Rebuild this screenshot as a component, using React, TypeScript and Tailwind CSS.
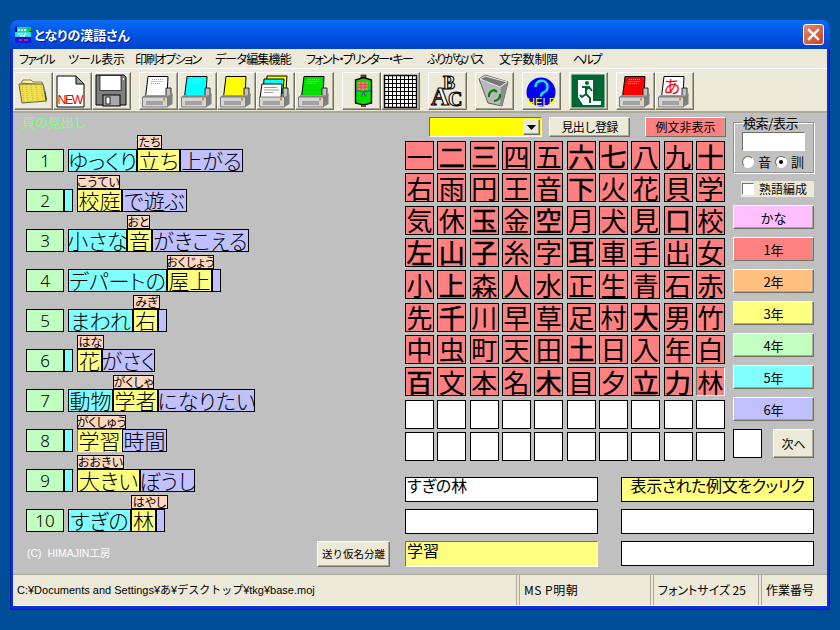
import React from 'react';

const raised = 'border border-t-white border-l-white border-r-[#716f64] border-b-[#716f64] shadow-[inset_-1px_-1px_0_#aca899]';
const sunken = 'border border-t-[#716f64] border-l-[#716f64] border-r-white border-b-white';
const jp = { fontFeatureSettings: '"palt"' };

const CYAN = 'bg-[#80ffff]';
const YELLOW = 'bg-[#ffff80]';
const PURPLE = 'bg-[#c0c0ff]';

type Row = {
  cyan: [string, number];
  kanji: [string, number];
  rest: [string, number];
  ruby: [string, number];
};

const rows: Row[] = [
  { cyan: ['ゆっくり', 69], kanji: ['立ち', 43], rest: ['上がる', 63], ruby: ['たち', 25] },
  { cyan: ['', 9], kanji: ['校庭', 45], rest: ['で遊ぶ', 65], ruby: ['こうてい', 43] },
  { cyan: ['小さな', 59], kanji: ['音', 25], rest: ['がきこえる', 97], ruby: ['おと', 23] },
  { cyan: ['デパートの', 99], kanji: ['屋上', 45], rest: ['', 9], ruby: ['おくじょう', 47] },
  { cyan: ['まわれ', 65], kanji: ['右', 25], rest: ['', 9], ruby: ['みぎ', 27] },
  { cyan: ['', 9], kanji: ['花', 25], rest: ['がさく', 53], ruby: ['はな', 27] },
  { cyan: ['動物', 45], kanji: ['学者', 45], rest: ['になりたい', 97], ruby: ['がくしゃ', 41] },
  { cyan: ['', 9], kanji: ['学習', 45], rest: ['時間', 45], ruby: ['がくしゅう', 49] },
  { cyan: ['', 9], kanji: ['大きい', 63], rest: ['ぼうし', 55], ruby: ['おおきい', 47] },
  { cyan: ['すぎの', 63], kanji: ['林', 25], rest: ['', 9], ruby: ['はやし', 37] },
];

const kanjiRows = [
  '一二三四五六七八九十',
  '右雨円王音下火花貝学',
  '気休玉金空月犬見口校',
  '左山子糸字耳車手出女',
  '小上森人水正生青石赤',
  '先千川早草足村大男竹',
  '中虫町天田土日入年白',
  '百文本名木目夕立力林',
];
const heavy = '二三六七十下玉空口左山子耳上千大土立力木百';

const menus = [
  ['ファイル', 'w-[49px] tracking-[-1.7px]'],
  ['ツール表示', 'w-[67px] tracking-[-0.3px]'],
  ['印刷オプション', 'w-[80px] tracking-[-1.6px]'],
  ['データ編集機能', 'w-[91px] tracking-[-0.8px]'],
  ['フォント・プリンター・キー', 'w-[121px] tracking-[-1.7px]'],
  ['ふりがなパス', 'w-[72px] tracking-[-1.9px]'],
  ['文字数制限', 'w-[74px] tracking-[-0.2px]'],
  ['ヘルプ', 'w-[30px] tracking-[-2.5px]'],
];

const grades = [
  ['かな', 'bg-[#ffc0ff]'],
  ['1年', 'bg-[#ff8080]'],
  ['2年', 'bg-[#ffc080]'],
  ['3年', 'bg-[#ffff80]'],
  ['4年', 'bg-[#c0ffc0]'],
  ['5年', 'bg-[#80ffff]'],
  ['6年', 'bg-[#c0c0ff]'],
];

const Tool = ({ children }: { children: React.ReactNode }) => (
  <div className={`w-[39px] h-[38px] bg-[#ece9d8] overflow-hidden ${raised}`}>
    <svg width="37" height="36" viewBox="1 1 37 36">{children}</svg>
  </div>
);

const PrinterBody = () => (
  <>
    <path d="M27 16h5v10h-5z" fill="#c0c0c0" stroke="#000" strokeWidth="0.8" />
    <path d="M3.5 25l2-2h25l3-1.500v3l-5 0.500z" fill="#9a9a9a" />
    <path d="M3.5 25h25v10h-25z" fill="#d4d4d4" stroke="#555" strokeWidth="0.7" />
    <path d="M28.500 25l5-3.500v10.500l-5 3z" fill="#808080" />
    <path d="M7 30h17M7 32h17" stroke="#707070" strokeWidth="1" />
    <rect x="24" y="26.500" width="2" height="1" fill="#e02020" />
    <rect x="24" y="28" width="2" height="1" fill="#e0c020" />
  </>
);

const Printer = ({ paper, dots = true, children }: { paper: string; dots?: boolean; children?: React.ReactNode }) => (
  <Tool>
    <path d="M9 4.500h20l-1 20.500H6.500z" fill={paper} stroke="#000" strokeWidth="1" />
    {dots && <path d="M13 7.500h12M12.500 9.500h12M12 11.500h9" stroke="#fff" strokeWidth="1" strokeDasharray="1 1" opacity="0.75" />}
    {children}
    <PrinterBody />
  </Tool>
);

const Num = ({ n }: { n: number }) => (
  <div className="w-[38px] h-[23px] shrink-0 border border-black bg-[#c0ffc0] flex items-center justify-center text-[17px] leading-none font-light text-black" style={{ fontFamily: '"Noto Sans", sans-serif' }}>
    {n}
  </div>
);

const segBase = 'h-[23px] shrink-0 flex items-center justify-center whitespace-nowrap text-[21px] leading-none font-light';

const Seg = ({ text, width, color, extra = '' }: { text: string; width: number; color: string; extra?: string }) => (
  <div className={`${segBase} border border-black ${color} ${extra}`} style={{ width, ...jp }}>
    {text}
  </div>
);

export default function App() {
  return (
    <div className="w-[840px] h-[630px] bg-[#004e98] pt-5 pl-2.5 overflow-hidden text-black" style={{ fontFamily: '"Noto Sans CJK JP", sans-serif' }}>
      <div className="w-[820px] h-[590px] rounded-t-lg bg-[#0831d9] flex flex-col shadow-[inset_-1px_-1px_0_#001ea0,inset_1px_0_0_#001ea0] overflow-hidden">
        {/* Title bar */}
        <div className="h-[29px] shrink-0 flex items-center pl-[5px] pr-[6px] bg-linear-to-b from-[#0a6cf5] via-[#0054e3] to-[#0042cc]">
          <svg width="16" height="16" viewBox="0 0 16 16" className="shrink-0">
            <rect width="16" height="16" fill="#0000c0" />
            <rect x="2" width="12" height="5" fill="#20d0a0" />
            <rect y="5" width="16" height="5" fill="#30e0e0" />
            <rect y="11" width="16" height="5" fill="#1818e0" />
            <path d="M3 3h10M3 7h10M5 9h6" stroke="#fff" strokeWidth="1.300" strokeDasharray="2 1" />
            <path d="M4 13h3M9 13h4" stroke="#ff3030" strokeWidth="1.500" />
            <rect x="12" width="4" height="4" fill="#30c030" />
          </svg>
          <span className="ml-[3px] text-[13px] font-bold text-white [text-shadow:1px_1px_0_#00209a]" style={jp}>となりの漢語さん</span>
          <div className="ml-auto w-[21px] h-[21px] rounded-[3px] border border-white bg-linear-to-br from-[#e8856a] to-[#c8401c] flex items-center justify-center">
            <svg width="13" height="13" viewBox="0 0 13 13">
              <path d="M2 2l9 9M11 2l-9 9" stroke="#fff" strokeWidth="2.400" strokeLinecap="square" />
            </svg>
          </div>
        </div>

        {/* Menu */}
        <div className="mx-[3px] h-[20px] shrink-0 bg-[#ece9d8] border-b border-white flex items-center text-[12px] leading-none pl-[6px]">
          {menus.map(([m, cls]) => (
            <span key={m} className={`shrink-0 whitespace-nowrap ${cls}`} style={jp}>{m}</span>
          ))}
        </div>

        {/* Toolbar */}
        <div className="mx-[3px] h-[44px] shrink-0 bg-[#ece9d8] border-b-2 border-[#aca899] flex items-center pl-px gap-2 pt-px">
          <div className="flex">
            <Tool>
              <path d="M7 11l2-3h8l2 2h9l1 3z" fill="#f8f0a0" stroke="#808060" />
              <path d="M5 12h24l3 17-24 2z" fill="#f0e050" stroke="#606040" />
              <path d="M8 13l2 17M12 13l2 17M17 13l2 17M22 13l2 16M27 13l2 16" stroke="#c8b830" strokeWidth="1.200" strokeDasharray="1 1" />
              <path d="M30 13l3 14-1 3-2-17z" fill="#404040" />
            </Tool>
            <Tool>
              <path d="M4 4h19l8 8v23H4z" fill="#fff" stroke="#000" />
              <path d="M23 4l8 8h-8z" fill="#a0a0a0" stroke="#000" />
              <text x="4.500" y="32" fontSize="12.500" fill="#f00000" fontFamily="Liberation Sans, sans-serif" textLength="26">NEW</text>
            </Tool>
            <Tool>
              <path d="M4 3h28l2 2v28H4z" fill="#808080" stroke="#000" />
              <rect x="8" y="3.500" width="21" height="15" fill="#fff" stroke="#000" strokeWidth="0.700" />
              <rect x="11" y="23" width="17" height="11" fill="#a8a8a8" stroke="#000" />
              <rect x="14" y="25" width="4" height="7" fill="#fff" stroke="#000" strokeWidth="0.800" />
              <rect x="31" y="6" width="1" height="2" fill="#fff" />
            </Tool>
          </div>
          <div className="flex">
            <Printer paper="#ffffff">
              <path d="M13 7.500h12M12.500 9.500h12M12 11.500h9" stroke="#999" strokeWidth="1" strokeDasharray="1 1" />
            </Printer>
            <Printer paper="#00ffff" />
            <Printer paper="#ffff00" />
            <Tool>
              <path d="M11 4h20l-1 14H10z" fill="#ffff00" stroke="#000" />
              <path d="M8 7h20l-1 14H7z" fill="#00ffff" stroke="#000" />
              <path d="M6 12h20l-1 14H4z" fill="#fff" stroke="#000" />
              <path d="M8 15.500h13M8 18h15M8 20.500h9" stroke="#999" strokeWidth="1" />
              <path d="M27 16h5v10h-5z" fill="#c0c0c0" stroke="#000" strokeWidth="0.800" />
              <path d="M3.500 25h25v10h-25z" fill="#d4d4d4" stroke="#555" strokeWidth="0.700" />
              <path d="M28.500 25l5-3.500v10.500l-5 3z" fill="#808080" />
              <path d="M7 30h17M7 32h17" stroke="#707070" strokeWidth="1" />
              <rect x="24" y="26.500" width="2" height="1" fill="#e02020" />
              <rect x="24" y="28" width="2" height="1" fill="#e0c020" />
            </Tool>
            <Printer paper="#00e000" />
          </div>
          <div className="flex">
            <Tool>
              <rect x="19" y="3" width="5" height="4" fill="#904020" stroke="#000" strokeWidth="0.600" />
              <path d="M13.500 8l8-2.500 8 2.500v23l-8 2-8-2z" fill="#00e000" stroke="#000" strokeWidth="1.400" />
              <rect x="16" y="10" width="10" height="8" fill="#f08080" />
              <path d="M16 12.500h10M16 15h10M19 10v8M23 10v8" stroke="#c03030" strokeWidth="0.600" />
              <path d="M13.500 18c5 2 11 2 16 0M21.500 19.500l-2 5M21.500 19.500l2 5" fill="none" stroke="#8020c0" strokeWidth="1" />
              <rect x="19" y="33" width="5" height="2" fill="#904020" />
            </Tool>
            <Tool>
              <rect x="3.500" y="3.500" width="32" height="32" fill="#fff" stroke="#000" strokeWidth="1.500" />
              <path d="M7.500 4v31M11.500 4v31M15.500 4v31M19.500 4v31M23.500 4v31M27.500 4v31M31.500 4v31M4 7.500h31M4 11.500h31M4 15.500h31M4 19.500h31M4 23.500h31M4 27.500h31M4 31.500h31" stroke="#000" strokeWidth="1" />
            </Tool>
          </div>
          <Tool>
            <g fontFamily="Liberation Serif, serif" fontWeight="700" fill="#fff" stroke="#000" strokeWidth="1.100">
              <text x="15" y="17" fontSize="18">B</text>
              <text x="3" y="33" fontSize="25">A</text>
              <text x="20" y="34" fontSize="20">C</text>
            </g>
          </Tool>
          <Tool>
            <path d="M4 7l6-4 23 7-6 24-14-3z" fill="#b8b8b8" stroke="#606060" />
            <path d="M27 34l6-24-7 5-1 19z" fill="#8c8c8c" />
            <path d="M5 7l5-3 22 6-7 5z" fill="#787878" stroke="#e8e8e8" />
            <path d="M14 25a6 6 0 0 1 5-7l3 2M25 22a6 6 0 0 1-6 7" fill="none" stroke="#008000" strokeWidth="2.200" />
          </Tool>
          <Tool>
            <circle cx="19" cy="20" r="14.500" fill="#0000f0" />
            <path d="M13.500 15a6 6 0 1 1 8 5.500c-2 .8-2.500 1.500-2.500 4" fill="none" stroke="#20e0f0" strokeWidth="2.600" />
            <text x="5" y="34" fontSize="11" fill="#ffff00" fontFamily="Liberation Sans, sans-serif" textLength="29">HELP</text>
          </Tool>
          <Tool>
            <rect x="2.500" y="2.500" width="33" height="33" fill="#006633" />
            <path d="M9 8h15v21h8v4H14l-5-8z" fill="#fff" />
            <circle cx="18" cy="11" r="2" fill="#006633" />
            <path d="M13 15h7l3 4M17 15v7l4 4v5M17 22l-4 3-2-2M20 15l-3 3" fill="none" stroke="#006633" strokeWidth="2" />
          </Tool>
          <div className="flex">
            <Printer paper="#ff0000" />
            <Printer paper="#ffffff" dots={false}>
              <text x="8.500" y="21" fontSize="17" fill="#ff0000" style={{ fontFamily: '"Noto Sans CJK JP", sans-serif' }}>あ</text>
            </Printer>
          </div>
        </div>

        {/* Body */}
        <div className="mx-[3px] h-[461px] shrink-0 bg-[#c0c0c0] flex">
          {/* Sentences */}
          <div className="w-[392px] shrink-0 flex flex-col">
            <div className="h-[19px] pl-[9px] pt-[1px] text-[13px] leading-4 text-[#80ff80]">頁の見出し</div>
            <div className="flex flex-col pl-[13px]">
              {rows.map((r, i) => (
                <div key={i} className="h-10 flex items-end">
                  <Num n={i + 1} />
                  <Seg text={r.cyan[0]} width={r.cyan[1]} color={CYAN} extra={r.cyan[0] ? 'ml-1' : ''} />
                  <div className={`relative shrink-0 ${r.cyan[0] ? '' : 'ml-1'}`}>
                    <div className="absolute left-0 bottom-[23px] h-[14px] border border-black bg-[#ffd8c0] text-[12px] leading-none flex items-center justify-center whitespace-nowrap" style={{ width: r.ruby[1], ...jp }}>
                      {r.ruby[0]}
                    </div>
                    {i === 7 ? (
                      <div className={`${segBase} ${YELLOW} ${sunken}`} style={{ width: r.kanji[1], ...jp }}>{r.kanji[0]}</div>
                    ) : (
                      <Seg text={r.kanji[0]} width={r.kanji[1]} color={YELLOW} />
                    )}
                  </div>
                  <Seg text={r.rest[0]} width={r.rest[1]} color={PURPLE} />
                </div>
              ))}
            </div>
            <div className="mt-[9px] pl-[14px] pr-[15px] h-[26px] flex items-center justify-between">
              <span className="text-[10.5px] text-white whitespace-nowrap" style={{ fontFamily: '"Liberation Sans", "Noto Sans CJK JP", sans-serif' }}>(C)&nbsp; HIMAJIN工房</span>
              <button className={`w-[73px] h-[26px] bg-[#ece9d8] text-[10.5px] leading-none whitespace-nowrap ${raised}`}>送り仮名分離</button>
            </div>
          </div>

          {/* Kanji panel and example fields */}
          <div className="flex-1 flex flex-col">
            <div className="flex">
              <div className="w-[321px] shrink-0 pt-1">
                <div className="flex items-stretch h-5">
                  <div className={`ml-6 w-[113px] flex bg-[#ffff00] p-px ${sunken}`}>
                    <div className="flex-1" />
                    <div className={`w-[17px] bg-[#ece9d8] flex items-center justify-center ${raised}`}>
                      <svg width="9" height="5" viewBox="0 0 18 10"><path d="M0 0h18L9 10z" fill="#000" /></svg>
                    </div>
                  </div>
                  <button className={`ml-[7px] w-[81px] bg-[#ece9d8] text-[12px] leading-none tracking-[-0.8px] ${raised}`}>見出し登録</button>
                  <button className={`ml-[15px] w-[81px] bg-[#ff8080] text-[12px] leading-none ${raised}`}>例文非表示</button>
                </div>
                <div className="mt-1 grid grid-cols-[repeat(10,29px)] auto-rows-[29px] gap-[3.33px]">
                  {kanjiRows.join('').split('').map((k, i) => (
                    <div key={i} className={`bg-[#ff8080] flex items-center justify-center text-[26px] leading-none ${i === 79 ? sunken : 'border border-black'} ${heavy.includes(k) ? '[-webkit-text-stroke:0.5px_black]' : ''}`}>
                      {k}
                    </div>
                  ))}
                  {Array.from({ length: 20 }).map((_, i) => (
                    <div key={i} className="bg-white border border-black" />
                  ))}
                </div>
              </div>

              {/* Right controls */}
              <div className="w-[81px] ml-[7px] shrink-0 flex flex-col">
                <fieldset className="mt-[3px] h-[57px] border border-[#909090] shadow-[1px_1px_0_#fff,inset_1px_1px_0_#fff] px-2">
                  <legend className="px-px text-[13px] leading-[13px] whitespace-nowrap tracking-[-0.4px]" style={jp}>検索/表示</legend>
                  <div className={`mt-[3px] h-[19px] bg-white ${sunken}`} />
                  <div className="mt-[4px] flex items-center text-[13px] leading-none">
                    <span className={`w-3 h-3 rounded-full bg-white ${sunken}`} />
                    <span className="ml-[4px]">音</span>
                    <span className={`ml-[4px] w-3 h-3 rounded-full bg-white flex items-center justify-center ${sunken}`}>
                      <span className="w-1 h-1 rounded-full bg-black" />
                    </span>
                    <span className="ml-[4px]">訓</span>
                  </div>
                </fieldset>
                <div className="mt-2 ml-2 h-4 flex items-center bg-[#ece9d8] text-[12px] leading-none">
                  <span className={`ml-px w-3 h-3 bg-white ${sunken}`} />
                  <span className="ml-[5px] whitespace-nowrap">熟語編成</span>
                </div>
                <div className="mt-2 flex flex-col gap-2">
                  {grades.map(([label, color]) => (
                    <button key={label} className={`h-6 text-[13px] leading-none ${color} ${raised}`} style={jp}>{label}</button>
                  ))}
                </div>
                <div className="mt-2 flex justify-between">
                  <div className="w-[29px] h-[29px] bg-white border border-black" />
                  <button className={`w-[41px] h-[29px] bg-[#ece9d8] text-[12px] leading-none ${raised}`}>次へ</button>
                </div>
              </div>
            </div>

            <div className="mt-4 grid grid-cols-[193px_193px] gap-x-[23px] auto-rows-[25px] gap-y-[7px]">
              <div className="bg-white border border-black text-[16px] leading-[14px] pl-px whitespace-nowrap" style={jp}>すぎの林</div>
              <div className="bg-[#ffff80] border border-black text-[16px] leading-[14px] text-center whitespace-nowrap tracking-[-0.4px]" style={jp}>表示された例文をクッリク</div>
              <div className="bg-white border border-black" />
              <div className="bg-white border border-black" />
              <div className={`h-[26px] bg-[#ffff80] text-[16px] leading-[16px] pl-px whitespace-nowrap ${sunken}`} style={jp}>学習</div>
              <div className="bg-white border border-black" />
            </div>
          </div>
        </div>

        {/* Status bar */}
        <div className="mx-[3px] h-[32px] shrink-0 border-t border-t-[#aca899] bg-[#ece9d8] flex text-[12px] leading-none border-b border-b-white">
          <div className="w-[504px] flex items-center pl-1 text-[11px] border-r border-r-[#aca899] whitespace-nowrap" style={{ fontFamily: '"Liberation Sans", "Noto Sans CJK JP", sans-serif' }}>C:¥Documents and Settings¥あ¥デスクトップ¥tkg¥base.moj</div>
          <div className="ml-[2px] w-[132px] flex items-center pl-[4px] tracking-[0.5px] border-x border-x-[#aca899] whitespace-nowrap">MS P明朝</div>
          <div className="ml-[2px] w-[106px] flex items-center pl-1 border-x border-x-[#aca899] whitespace-nowrap" style={jp}>フォントサイズ 25</div>
          <div className="ml-[2px] flex-1 flex items-center pl-1 border-l border-l-[#aca899] whitespace-nowrap">作業番号</div>
        </div>
      </div>
    </div>
  );
}
